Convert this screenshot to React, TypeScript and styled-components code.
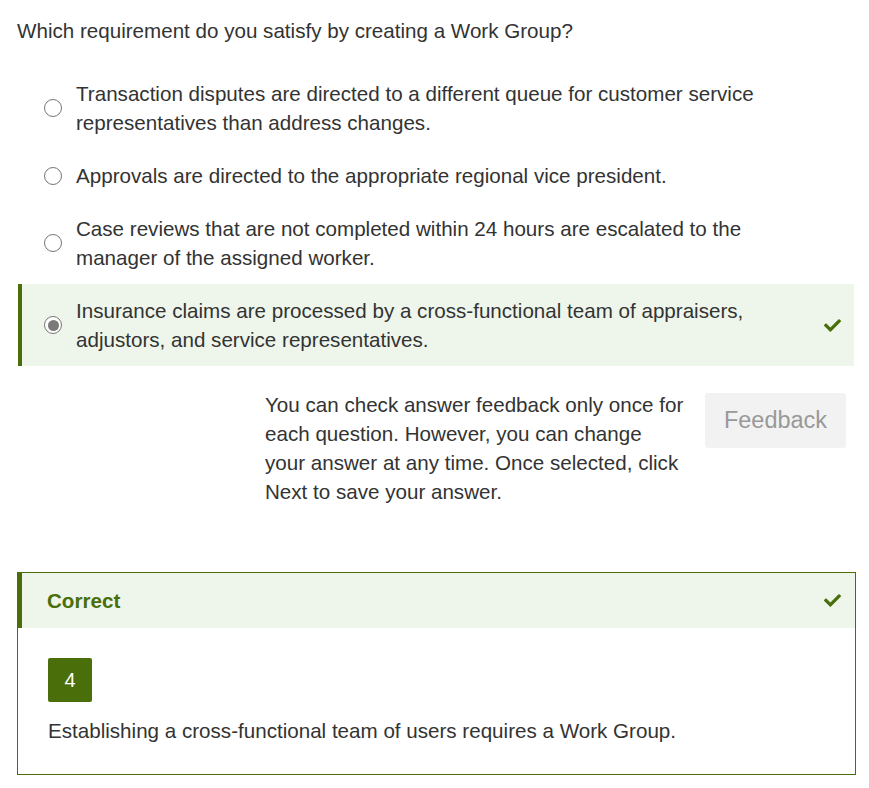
import React from 'react'
import styled, { createGlobalStyle } from 'styled-components'
import { FaCheck } from 'react-icons/fa'

const GREEN = '#4a6f0a'
const LIGHT = '#eef6eb'

const GlobalStyle = createGlobalStyle`
  body {
    margin: 0;
    background: #fff;
    font-family: "Liberation Sans", Arial, sans-serif;
    color: #333;
  }
`

const Page = styled.div`
  width: 839px;
  padding: 16px 0 12px 17px;
`

const Question = styled.p`
  margin: 0 0 22px;
  font-size: 20.6px;
  line-height: 29px;
`

const Options = styled.div`
  display: flex;
  flex-direction: column;
`

const OptionRow = styled.label<{ $selected?: boolean }>`
  display: flex;
  align-items: center;
  margin-left: 1px;
  margin-right: 2px;
  padding: 12px 13px 12px 22px;
  border-left: 4px solid ${({ $selected }) => ($selected ? GREEN : 'transparent')};
  background: ${({ $selected }) => ($selected ? LIGHT : 'transparent')};
  font-size: 20.6px;
  line-height: 29px;
`

const Radio = styled.span<{ $checked?: boolean }>`
  flex: none;
  box-sizing: border-box;
  width: 18px;
  height: 18px;
  border: 1.5px solid #767676;
  border-radius: 50%;
  margin-right: 14px;
  display: flex;
  align-items: center;
  justify-content: center;
  background: #fff;

  &::after {
    content: '';
    display: ${({ $checked }) => ($checked ? 'block' : 'none')};
    width: 11px;
    height: 11px;
    border-radius: 50%;
    background: #7a7a7a;
  }
`

const OptionText = styled.span`
  flex: 1;
  margin-right: 40px;
`

const Tick = styled.span`
  color: ${GREEN};
  display: flex;
  font-size: 17px;
`

const FeedbackRow = styled.div`
  display: flex;
  justify-content: flex-end;
  align-items: flex-start;
  gap: 20px;
  margin: 24px 10px 66px 0;
`

const FeedbackText = styled.p`
  margin: 0;
  width: 420px;
  font-size: 20.6px;
  line-height: 29px;
`

const FeedbackButton = styled.button`
  margin-top: 3px;
  width: 141px;
  height: 55px;
  border: none;
  border-radius: 3px;
  background: #f2f2f2;
  color: #999;
  font-family: inherit;
  font-size: 23.5px;
`

const ResultBox = styled.div`
  border: 1px solid ${GREEN};
`

const ResultHeader = styled.div`
  display: flex;
  align-items: center;
  justify-content: space-between;
  height: 55px;
  padding: 0 14px 0 25px;
  border-left: 4px solid ${GREEN};
  background: ${LIGHT};
  color: ${GREEN};
  font-size: 20.6px;
  font-weight: bold;
`

const ResultBody = styled.div`
  padding: 30px 30px 29px 30px;
`

const Badge = styled.div`
  width: 44px;
  height: 44px;
  border-radius: 2px;
  background: ${GREEN};
  color: #fff;
  display: flex;
  align-items: center;
  justify-content: center;
  font-size: 20px;
  margin-bottom: 14px;
`

const Explanation = styled.p`
  margin: 0;
  font-size: 20.6px;
  line-height: 29px;
`

const options = [
  'Transaction disputes are directed to a different queue for customer service representatives than address changes.',
  'Approvals are directed to the appropriate regional vice president.',
  'Case reviews that are not completed within 24 hours are escalated to the manager of the assigned worker.',
  'Insurance claims are processed by a cross-functional team of appraisers, adjustors, and service representatives.',
]

export default function App() {
  const selected = 3
  return (
    <>
      <GlobalStyle />
      <Page>
        <Question>Which requirement do you satisfy by creating a Work Group?</Question>
        <Options>
          {options.map((text, i) => (
            <OptionRow key={i} $selected={i === selected}>
              <Radio $checked={i === selected} />
              <OptionText>{text}</OptionText>
              {i === selected && (
                <Tick>
                  <FaCheck />
                </Tick>
              )}
            </OptionRow>
          ))}
        </Options>
        <FeedbackRow>
          <FeedbackText>
            You can check answer feedback only once for each question. However, you can change
            your answer at any time. Once selected, click Next to save your answer.
          </FeedbackText>
          <FeedbackButton>Feedback</FeedbackButton>
        </FeedbackRow>
        <ResultBox>
          <ResultHeader>
            <span>Correct</span>
            <Tick>
              <FaCheck />
            </Tick>
          </ResultHeader>
          <ResultBody>
            <Badge>4</Badge>
            <Explanation>Establishing a cross-functional team of users requires a Work Group.</Explanation>
          </ResultBody>
        </ResultBox>
      </Page>
    </>
  )
}
